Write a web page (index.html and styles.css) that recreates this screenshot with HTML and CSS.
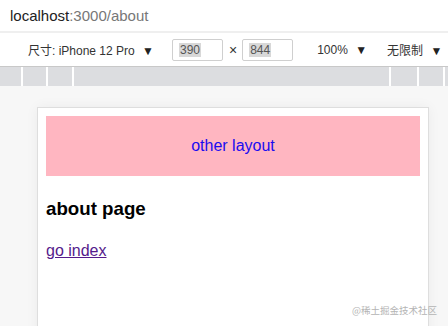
FILE: index.html
```html
<!DOCTYPE html>
<html lang="zh">
<head>
    <meta charset="UTF-8">
    <meta name="viewport" content="width=device-width, initial-scale=1.0">
    <title>about</title>
    <link rel="stylesheet" href="styles.css">
</head>
<body>

    <!-- Address bar -->
    <div class="urlbar">
        <span class="host">localhost</span><span class="path">:3000/about</span>
    </div>

    <!-- Device toolbar -->
    <div class="toolbar">
        <span class="device-name">尺寸: iPhone 12 Pro <span class="caret">▼</span></span>
        <span class="size-box"><span class="sel">390</span></span>
        <span class="times">×</span>
        <span class="size-box"><span class="sel">844</span></span>
        <span class="zoom">100% <span class="caret">▼</span></span>
        <span class="throttle">无限制 <span class="caret">▼</span></span>
    </div>

    <!-- Media query ruler -->
    <div class="ruler">
        <span class="seg seg-a"></span>
        <span class="seg seg-b"></span>
        <span class="seg seg-c"></span>
        <span class="seg seg-mid"></span>
        <span class="seg seg-d"></span>
        <span class="seg seg-e"></span>
        <span class="seg seg-f"></span>
    </div>

    <div class="stage">
        <div class="device">
            <div class="layout">other layout</div>
            <h3 class="title">about page</h3>
            <p class="nav"><a href="#">go index</a></p>
        </div>
    </div>

    <div class="watermark">@稀土掘金技术社区</div>

</body>
</html>
```

FILE: styles.css
```css
body {
    margin: 0;
    padding: 0;
    width: 448px;
    height: 326px;
    overflow: hidden;
    position: relative;
    font-family: "Liberation Sans", "Noto Sans CJK SC", sans-serif;
    background: #f7f7f7;
}

/* Address bar */
.urlbar {
    height: 31px;
    display: flex;
    align-items: center;
    padding-left: 10px;
    font-size: 15px;
    background: white;
    border-bottom: 2px solid #efefef;
}

.host {
    color: #222;
}

.path {
    color: #777;
}

/* Device toolbar */
.toolbar {
    height: 33px;
    display: flex;
    align-items: center;
    background: white;
    font-size: 12px;
    color: #333;
    border-bottom: 1px solid #c8c8c8;
}

.caret {
    font-size: 12px;
    margin-left: 4px;
    color: #222;
}

.device-name {
    margin-left: 28px;
}

.size-box {
    margin-left: 18px;
    width: 43px;
    height: 20px;
    border: 1px solid #cfcfcf;
    border-radius: 2px;
    padding-left: 6px;
    display: flex;
    align-items: center;
    color: #555;
}

.sel {
    background: #d8d8d8;
    padding: 0 1px;
}

.times {
    margin-left: 6px;
    font-size: 14px;
}

.times + .size-box {
    margin-left: 5px;
}

.zoom {
    margin-left: 24px;
}

.throttle {
    margin-left: 20px;
}

/* Ruler */
.ruler {
    height: 19px;
    display: flex;
    gap: 2px;
    background: white;
}

.seg {
    background: #dcdde0;
    height: 100%;
}

.seg-a { width: 21px; }
.seg-b { width: 23px; }
.seg-c { width: 24px; }
.seg-mid { flex: 1; }
.seg-d { width: 26px; }
.seg-e { width: 24px; }
.seg-f { width: 3px; }

/* Emulated viewport */
.stage {
    padding: 21px 0 0 37px;
}

.device {
    width: 392px;
    height: 400px;
    background: white;
    border: 1px solid #dedede;
    box-shadow: 0 0 12px rgba(0,0,0,0.05);
    padding: 8px;
    box-sizing: border-box;
    font-family: "Liberation Sans", sans-serif;
}

.layout {
    height: 60px;
    line-height: 60px;
    background: lightpink;
    color: #1a0cf0;
    text-align: center;
    font-size: 16px;
}

.title {
    font-size: 18.72px;
    margin: 22px 0 0;
}

.nav {
    margin: 22px 0 0;
    font-size: 16px;
}

.nav a {
    color: #551a8b;
}

.watermark {
    position: absolute;
    right: 11px;
    bottom: 9px;
    font-size: 9.5px;
    color: #b4b4b4;
    font-family: "Noto Sans CJK SC", sans-serif;
}
```
